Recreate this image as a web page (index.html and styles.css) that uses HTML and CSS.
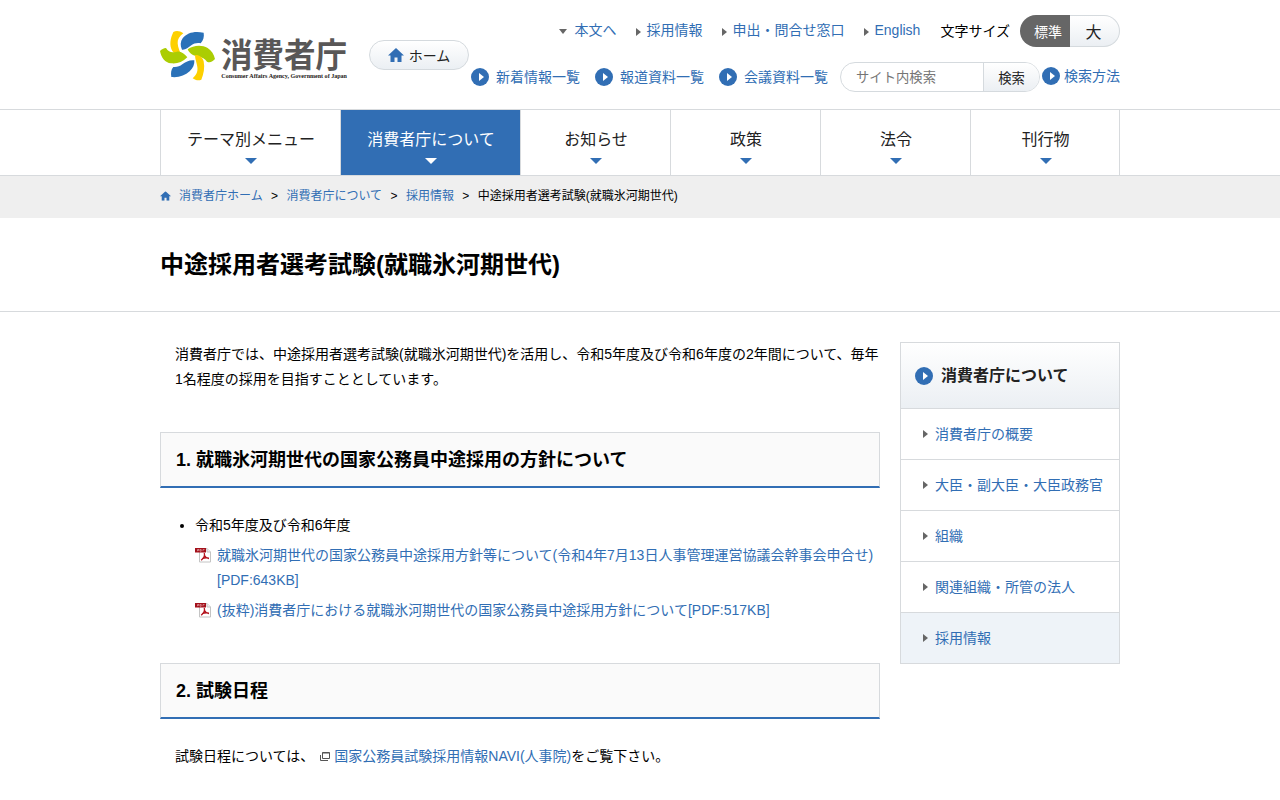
FILE: index.html
```html
<!DOCTYPE html>
<html lang="ja">
<head>
    <meta charset="UTF-8">
    <meta name="viewport" content="width=device-width, initial-scale=1.0">
    <title>中途採用者選考試験(就職氷河期世代) | 消費者庁</title>
    <link rel="stylesheet" href="styles.css">
</head>
<body>
    <svg class="sprite" width="0" height="0">
        <symbol id="circle-arrow" viewBox="0 0 18 18">
            <circle cx="9" cy="9" r="9" fill="#316eb4"/>
            <path d="M8 5l5 4-5 4z" fill="#fff"/>
        </symbol>
        <symbol id="house" viewBox="0 0 16 14">
            <path d="M8 0l8 7.5h-2.500V14H9.500V9.500h-3V14h-4V7.500H0z" fill="#316eb4"/>
        </symbol>
        <symbol id="pdf" viewBox="0 0 16 16">
            <path d="M4.500 1.500h7.500l3.500 3.500v10h-11z" fill="#fff" stroke="#c4c4c4"/>
            <path d="M12 1.500V5h3.500" fill="#eee" stroke="#c4c4c4"/>
            <path d="M0 1h11v4.500H0z" fill="#a3111b"/>
            <path d="M2.500 4.200v-1.700h1.500v.8H2.500M5 2.500v1.700h1.200V2.500zM8 4.200V2.500h1.500" fill="none" stroke="#e3a5a9" stroke-width=".7"/>
            <path d="M9.200 6c.8 2-.2 4.800-3 7.300M9.500 8.500c.8 2 2 2.700 4.500 3M7.200 11.700c2-.9 4-1.200 6.300-.7" fill="none" stroke="#b4141e" stroke-width="1.300"/>
        </symbol>
    </svg>

    <header class="header">
        <div class="container header-inner">
            <a class="logo" href="#">
                <svg width="188" height="51" viewBox="30 30 564 153">
                    <path d="M70 36c8-4 19-4 30 4-12 9-18 18-17 30 1 13 6 24 11 35-10 2-21-3-27-12-10-17-6-38 3-57z" fill="#fdd000"/>
                    <path d="M98 55c14-17 34-22 63-17 2 12-1 23-9 32-11-2-20 0-28 6-9 7-19 15-28 13-6-12-5-24 2-34z" fill="#2a71b8"/>
                    <path d="M30 93c4 21 15 35 33 37 18 2 34-3 49-18-9-11-19-19-31-17-14 3-25 3-33-11-7 1-13 4-18 9z" fill="#abcd03"/>
                    <path d="M113 88c16-12 42-15 60-4 12 8 19 19 22 33-7 8-15 12-24 8-6-9-15-14-26-15-13-2-26-8-32-22z" fill="#abcd03"/>
                    <path d="M133 121c1 13-4 24-14 33-14 13-32 19-55 17-2-12-1-22 6-30 10 1 19-1 27-8 10-8 23-14 36-12z" fill="#2a71b8"/>
                    <path d="M135 105c13-1 23 7 26 19 4 19 0 38-7 55-8 4-18 2-26-4 11-10 16-20 14-34-2-13-7-24-7-36z" fill="#fdd000"/>
                    <text class="logo-ja" x="213" y="140" textLength="378" lengthAdjust="spacingAndGlyphs">消費者庁</text>
                    <text class="logo-en" x="214" y="173" textLength="377" lengthAdjust="spacingAndGlyphs">Consumer Affairs Agency, Government of Japan</text>
                </svg>
            </a>
            <a class="home-btn" href="#">
                <svg width="16" height="14"><use href="#house"/></svg>
                <span>ホーム</span>
            </a>
            <div class="header-nav">
                <ul class="sub-links">
                    <li><a class="down" href="#main">本文へ</a></li>
                    <li><a href="#">採用情報</a></li>
                    <li><a href="#">申出・問合せ窓口</a></li>
                    <li><a href="#">English</a></li>
                    <li class="size-label">文字サイズ</li>
                    <li class="size-toggle">
                        <button class="size-btn selected">標準</button>
                        <button class="size-btn large">大</button>
                    </li>
                </ul>
                <div class="info-links">
                    <a href="#"><svg width="18" height="18"><use href="#circle-arrow"/></svg>新着情報一覧</a>
                    <a href="#"><svg width="18" height="18"><use href="#circle-arrow"/></svg>報道資料一覧</a>
                    <a href="#"><svg width="18" height="18"><use href="#circle-arrow"/></svg>会議資料一覧</a>
                    <form class="search">
                        <input class="search-input" type="text" placeholder="サイト内検索">
                        <button class="search-btn" type="button">検索</button>
                    </form>
                    <a class="search-help" href="#"><svg width="18" height="18"><use href="#circle-arrow"/></svg>検索方法</a>
                </div>
            </div>
        </div>
    </header>

    <nav class="global-nav">
        <ul class="container global-list">
            <li class="wide"><a href="#">テーマ別メニュー</a></li>
            <li class="wide active"><a href="#">消費者庁について</a></li>
            <li><a href="#">お知らせ</a></li>
            <li><a href="#">政策</a></li>
            <li><a href="#">法令</a></li>
            <li><a href="#">刊行物</a></li>
        </ul>
    </nav>

    <div class="breadcrumb">
        <ol class="container breadcrumb-list">
            <li><a href="#"><svg width="11" height="10" viewBox="0 0 16 14"><use href="#house" width="16" height="14"/></svg>消費者庁ホーム</a></li>
            <li><a href="#">消費者庁について</a></li>
            <li><a href="#">採用情報</a></li>
            <li>中途採用者選考試験(就職氷河期世代)</li>
        </ol>
    </div>

    <div class="page-title">
        <h1 class="container">中途採用者選考試験(就職氷河期世代)</h1>
    </div>

    <div class="container columns">
        <main class="main" id="main">
            <p>消費者庁では、中途採用者選考試験(就職氷河期世代)を活用し、令和5年度及び令和6年度の2年間について、毎年1名程度の採用を目指すこととしています。</p>

            <h2>1. 就職氷河期世代の国家公務員中途採用の方針について</h2>
            <ul class="doc-list">
                <li>令和5年度及び令和6年度
                    <ul class="pdf-list">
                        <li><svg width="16" height="16"><use href="#pdf"/></svg><a href="#">就職氷河期世代の国家公務員中途採用方針等について(令和4年7月13日人事管理運営協議会幹事会申合せ)[PDF:643KB]</a></li>
                        <li><svg width="16" height="16"><use href="#pdf"/></svg><a href="#">(抜粋)消費者庁における就職氷河期世代の国家公務員中途採用方針について[PDF:517KB]</a></li>
                    </ul>
                </li>
            </ul>

            <h2>2. 試験日程</h2>
            <p>試験日程については、<a href="#"><svg class="blank-icon" width="10" height="9" viewBox="0 0 10 9"><path d="M2.500.5h7v6h-7zM2.500 1h7M.5 3v5.500H8" fill="none" stroke="#555"/></svg>国家公務員試験採用情報NAVI(人事院)</a>をご覧下さい。</p>
        </main>

        <aside class="side">
            <h2 class="side-title"><svg width="18" height="18"><use href="#circle-arrow"/></svg>消費者庁について</h2>
            <ul class="side-list">
                <li><a href="#">消費者庁の概要</a></li>
                <li><a href="#">大臣・副大臣・大臣政務官</a></li>
                <li><a href="#">組織</a></li>
                <li><a href="#">関連組織・所管の法人</a></li>
                <li class="current"><a href="#">採用情報</a></li>
            </ul>
        </aside>
    </div>
</body>
</html>
```

FILE: styles.css
```css
* {
    margin: 0;
    padding: 0;
    box-sizing: border-box;
}

body {
    font-family: "Liberation Sans", "Noto Sans CJK JP", sans-serif;
    font-size: 14px;
    line-height: 25px;
    color: #000;
    background-color: #fff;
    height: 800px;
    overflow: hidden;
}

a {
    color: #316eb4;
    text-decoration: none;
}

ul,
ol {
    list-style: none;
}

svg {
    display: block;
    flex-shrink: 0;
}

button,
input {
    font-family: inherit;
    border: none;
    background: none;
    outline: none;
}

.sprite {
    position: absolute;
}

.container {
    width: 960px;
    margin: 0 auto;
}

/* header */
.header {
    height: 110px;
    border-bottom: 1px solid #d7dadd;
}

.header-inner {
    display: flex;
    align-items: flex-start;
}

.logo {
    margin: 30px 21px 0 0;
}

.logo svg {
    overflow: visible;
}

.logo-ja {
    font-size: 100px;
    font-weight: bold;
    fill: #595757;
}

.logo-en {
    font-family: "Liberation Serif", serif;
    font-size: 19px;
    font-weight: bold;
    fill: #231815;
}

.home-btn {
    display: flex;
    align-items: center;
    justify-content: center;
    gap: 5px;
    width: 100px;
    height: 30px;
    margin-top: 40px;
    padding-top: 2px;
    border: 1px solid #d5dade;
    border-radius: 15px;
    background: linear-gradient(#fff, #ebeff3);
    color: #222;
}

.home-btn svg {
    margin-bottom: 3px;
}

.header-nav {
    flex: 1;
    padding: 15px 0 0 2px;
}

.sub-links {
    display: flex;
    justify-content: flex-end;
    align-items: center;
    height: 32px;
}

.sub-links li {
    margin-left: 20px;
}

.sub-links a {
    display: flex;
    align-items: center;
    gap: 5px;
    padding-bottom: 2px;
}

.sub-links a::before {
    content: "";
    margin-top: 3px;
    border: 4px solid transparent;
    border-left: 5px solid #666;
    border-right: none;
}

.sub-links a.down {
    gap: 7px;
}

.sub-links a.down::before {
    border: 4px solid transparent;
    border-top: 5px solid #666;
    border-bottom: none;
}

.sub-links .size-toggle {
    display: flex;
    width: 100px;
    height: 32px;
    margin-left: 10px;
}

.size-btn {
    width: 50px;
    font-size: 14px;
}

.size-btn.selected {
    padding-left: 6px;
    border-radius: 16px 0 0 16px;
    background-color: #666;
    color: #fff;
}

.size-btn.large {
    padding: 0 2px 1px 0;
    border: 1px solid #d5dade;
    border-left: none;
    border-radius: 0 16px 16px 0;
    background: linear-gradient(#fff, #ebeff3);
    font-size: 16px;
    color: #222;
}

.info-links {
    display: flex;
    align-items: center;
    height: 30px;
    margin-top: 15px;
}

.info-links a {
    display: flex;
    align-items: center;
    gap: 7px;
    margin-right: 15px;
}

.search {
    display: flex;
    width: 200px;
    height: 30px;
    margin-left: -3px;
    border: 1px solid #d5dade;
    border-radius: 15px;
    overflow: hidden;
}

.search-input {
    width: 142px;
    padding-left: 15px;
    font-size: 13.333px;
}

.search-btn {
    flex: 1;
    border-left: 1px solid #d5dade;
    background: linear-gradient(#fff, #ebeff3);
    font-size: 13.333px;
    color: #222;
}

.info-links .search-help {
    gap: 4px;
    margin: 0 0 2px 2px;
}

/* global navigation */
.global-nav {
    height: 66px;
    border-bottom: 1px solid #d7dadd;
}

.global-list {
    display: flex;
    height: 65px;
    border-left: 1px solid #d7dadd;
}

.global-list li {
    flex: 0 0 150px;
    border-right: 1px solid #d7dadd;
}

.global-list li.wide {
    flex-basis: 180px;
}

.global-list li:last-child {
    flex-basis: 149px;
}

.global-list a {
    display: flex;
    flex-direction: column;
    align-items: center;
    height: 100%;
    padding: 17px 0 0 1px;
    font-size: 16px;
    color: #222;
}

.global-list a::after {
    content: "";
    margin-top: 6px;
    border: 6px solid transparent;
    border-top-color: #316eb4;
    border-bottom: none;
}

.global-list .active a {
    background-color: #316eb4;
    color: #fff;
}

.global-list .active a::after {
    border-top-color: #fff;
}

/* breadcrumb */
.breadcrumb {
    height: 42px;
    background-color: #efefef;
}

.breadcrumb-list {
    display: flex;
    font-size: 12px;
    line-height: 41px;
}

.breadcrumb-list a {
    display: flex;
    align-items: center;
    gap: 8px;
}

.breadcrumb-list svg {
    margin-bottom: 2px;
}

.breadcrumb-list li {
    display: flex;
}

.breadcrumb-list li + li::before {
    content: ">";
    margin: 0 8.400px;
}

.page-title {
    height: 94px;
    border-bottom: 1px solid #d7dadd;
}

.page-title h1 {
    font-size: 24px;
    line-height: 94px;
}

/* contents */
.columns {
    display: flex;
    align-items: flex-start;
    gap: 20px;
    padding-top: 30px;
}

.main {
    width: 720px;
}

.main p {
    padding-left: 15px;
}

.main h2 {
    height: 56px;
    margin: 40px 0 25px;
    padding-left: 15px;
    border: 1px solid #d7dadd;
    border-bottom: 2px solid #316eb4;
    background-color: #fafafa;
    font-size: 18px;
    line-height: 54px;
}

.doc-list {
    padding-left: 35px;
    list-style: disc;
}

.pdf-list li {
    display: flex;
    gap: 6px;
    margin-top: 5px;
}

.pdf-list svg {
    margin-top: 4px;
}

.blank-icon {
    display: inline-block;
    margin: 0 4px 0 6px;
}

/* side menu */
.side {
    width: 220px;
    border: 1px solid #d7dadd;
}

.side-title {
    display: flex;
    align-items: center;
    gap: 8px;
    height: 65px;
    padding-left: 14px;
    background: linear-gradient(#fff, #ebeff3);
    font-size: 16px;
    color: #222;
}

.side-list li {
    border-top: 1px solid #d7dadd;
}

.side-list a {
    display: flex;
    align-items: center;
    gap: 7px;
    height: 50px;
    padding-left: 22px;
}

.side-list a::before {
    content: "";
    border: 4px solid transparent;
    border-left: 5px solid #666;
    border-right: none;
}

.side-list .current {
    background-color: #eef3f8;
}
```
